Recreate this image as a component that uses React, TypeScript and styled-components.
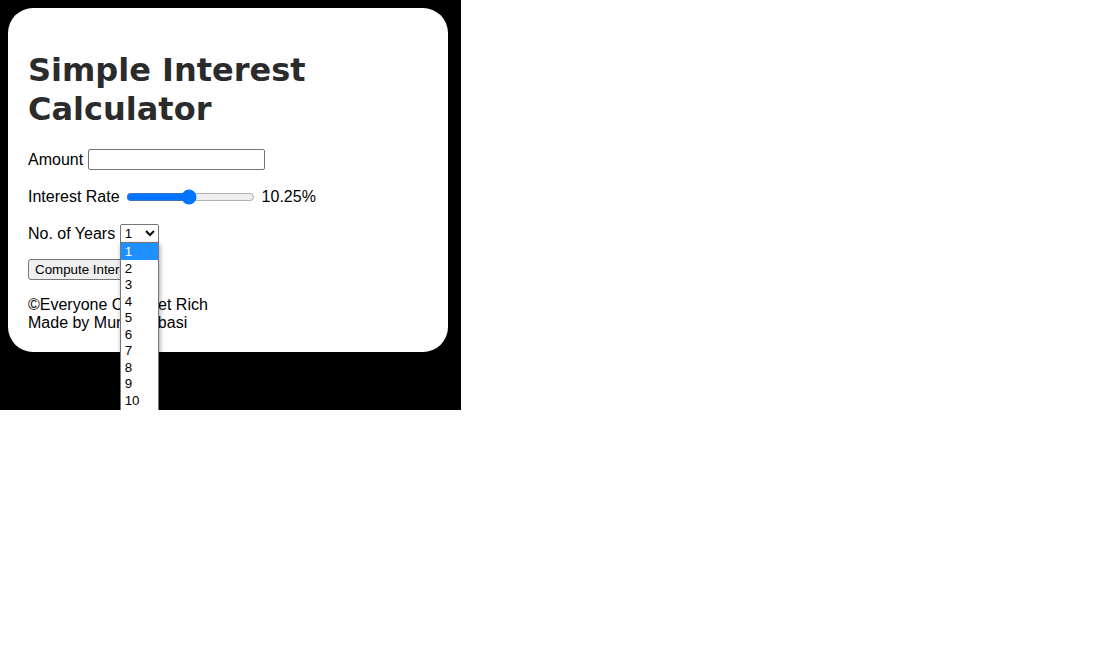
import styled, { createGlobalStyle } from "styled-components";

const GlobalStyle = createGlobalStyle`
  html, body {
    margin: 0;
    background: #fff;
  }

  body {
    font-family: "Liberation Sans", Arial, sans-serif;
    font-size: 16px;
    color: #000;
  }
`;

const Stage = styled.div`
  width: 461px;
  height: 410px;
  box-sizing: border-box;
  padding: 8px 13px 0 8px;
  background: #000;
  overflow: hidden;
`;

const Card = styled.div`
  width: 440px;
  box-sizing: border-box;
  padding: 20px 20px 20px;
  background: #fff;
  border-radius: 25px;
`;

const Title = styled.h1`
  margin: 23px 0 20px;
  font-family: "DejaVu Sans", Verdana, sans-serif;
  font-weight: bold;
  font-size: 32px;
  line-height: 39px;
  color: #2b2b2b;
`;

const Row = styled.div<{ $top: number; $height: number }>`
  display: flex;
  align-items: center;
  gap: 4.5px;
  margin-top: ${({ $top }) => $top}px;
  height: ${({ $height }) => $height}px;
  line-height: 18px;
`;

const AmountInput = styled.input`
  width: 177px;
  height: 21px;
  box-sizing: border-box;
  padding: 1px 2px;
  border: 1px solid #767676;
  border-radius: 2px;
  font: 13.33px "Liberation Sans", Arial, sans-serif;
`;

const Slider = styled.input`
  width: 129px;
  height: 16px;
  margin: 2px;
`;

const SelectWrap = styled.div`
  position: relative;
  display: flex;
`;

const YearSelect = styled.select`
  width: 39px;
  height: 19px;
  box-sizing: border-box;
  margin: 0;
  font: 13.33px "Liberation Sans", Arial, sans-serif;
`;

// the opened option list of the years select
const OptionList = styled.ul`
  position: absolute;
  top: 18px;
  left: 0;
  width: 39px;
  box-sizing: border-box;
  margin: 0;
  padding: 0;
  list-style: none;
  background: #fff;
  border: 1px solid #767676;
  box-shadow: 1px 2px 5px rgba(0, 0, 0, 0.35);
  z-index: 2;
`;

const OptionItem = styled.li<{ $active?: boolean }>`
  height: 16.55px;
  padding-left: 4px;
  font-size: 13.33px;
  line-height: 18px;
  background: ${({ $active }) => ($active ? "#1e90ff" : "#fff")};
  color: ${({ $active }) => ($active ? "#fff" : "#000")};
`;

const ComputeButton = styled.button`
  height: 21px;
  box-sizing: border-box;
  padding: 1px 6px;
  border: 1px solid #767676;
  border-radius: 3px;
  background: #efefef;
  font: 13.33px "Liberation Sans", Arial, sans-serif;
  color: #000;
`;

const Footer = styled.div`
  margin-top: 16px;
  line-height: 18px;
`;

const YEARS = Array.from({ length: 12 }, (_, i) => i + 1);

export default function App() {
  return (
    <>
      <GlobalStyle />
      <Stage>
        <Card>
          <Title>
            Simple Interest
            <br />
            Calculator
          </Title>

          <Row $top={0} $height={21}>
            <span>Amount</span>
            <AmountInput type="number" />
          </Row>

          <Row $top={17} $height={20}>
            <span>Interest Rate</span>
            <Slider type="range" min={1} max={20} step={0.25} defaultValue={10.25} />
            <span>10.25%</span>
          </Row>

          <Row $top={17} $height={19}>
            <span>No. of Years</span>
            <SelectWrap>
              <YearSelect defaultValue="1">
                {YEARS.map((y) => (
                  <option key={y} value={y}>
                    {y}
                  </option>
                ))}
              </YearSelect>
              <OptionList>
                {YEARS.map((y) => (
                  <OptionItem key={y} $active={y === 1}>
                    {y}
                  </OptionItem>
                ))}
              </OptionList>
            </SelectWrap>
          </Row>

          <Row $top={16} $height={21}>
            <ComputeButton>Compute Interest</ComputeButton>
          </Row>

          <Footer>
            ©Everyone Can Get Rich
            <br />
            Made by Murat Abbasi
          </Footer>
        </Card>
      </Stage>
    </>
  );
}
